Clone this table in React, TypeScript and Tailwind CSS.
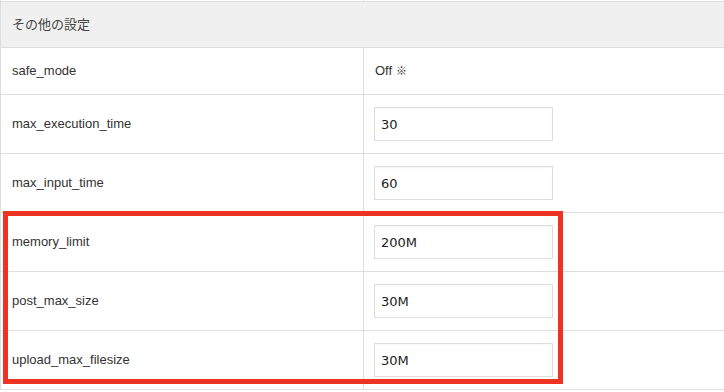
const rows = [
  { name: "max_execution_time", value: "30" },
  { name: "max_input_time", value: "60" },
  { name: "memory_limit", value: "200M" },
  { name: "post_max_size", value: "30M" },
  { name: "upload_max_filesize", value: "30M" },
];

function InputRow({ name, value }: { name: string; value: string }) {
  return (
    <div className="grid grid-cols-[363px_1fr] h-[59px] border-b border-[#dddddd]">
      <div className="flex items-center pl-[11px] border-r border-[#dddddd]">{name}</div>
      <div className="flex items-center pl-[10px]">
        <input
          readOnly
          value={value}
          className="w-[179px] h-[34px] border border-[#dddddd] bg-white px-[6px] text-[13px] text-[#222] outline-none shadow-[inset_0_1px_2px_rgba(0,0,0,0.04)]"
          style={{ fontFamily: '"DejaVu Sans", Verdana, sans-serif' }}
        />
      </div>
    </div>
  );
}

export default function App() {
  return (
    <div
      className="relative w-[724px] h-[392px] overflow-hidden bg-white text-[13px] text-[#333]"
      style={{ fontFamily: '"Liberation Sans", Arial, "Noto Sans CJK JP", sans-serif' }}
    >
      <div className="border-l border-[#dddddd]">
        <div className="grid grid-cols-[363px_1fr] h-px">
          <div className="border-r border-[#dddddd]" />
          <div />
        </div>
        <div className="h-[47px] flex items-center pl-[11px] bg-[#f0f0f0] border-y border-[#dddddd] text-[#444]">
          その他の設定
        </div>
        <div className="grid grid-cols-[363px_1fr] h-[47px] border-b border-[#dddddd]">
          <div className="flex items-center pl-[11px] border-r border-[#dddddd]">safe_mode</div>
          <div className="flex items-center pl-[11px]">
            Off <span className="ml-1 text-[11px] text-[#333]">※</span>
          </div>
        </div>
        {rows.map((r) => (
          <InputRow key={r.name} name={r.name} value={r.value} />
        ))}
      </div>

      {/* annotation box */}
      <div className="absolute left-[3px] top-[211px] w-[560px] h-[173px] border-[5px] border-[#ee3322]" />
    </div>
  );
}
